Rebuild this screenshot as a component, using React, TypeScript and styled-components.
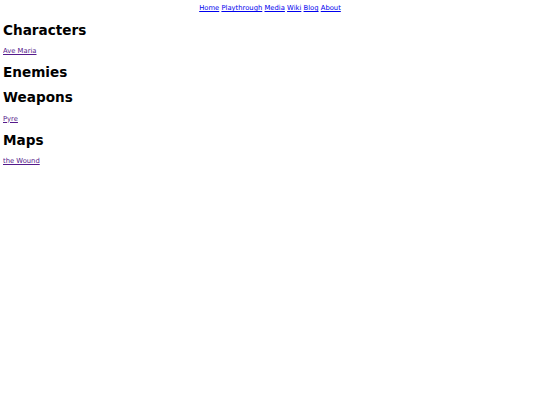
import styled, { createGlobalStyle } from "styled-components";

const GlobalStyle = createGlobalStyle`
  html, body {
    background: #ffffff;
  }

  body {
    margin: 4px 3px 3px;
    font-family: "DejaVu Sans", sans-serif;
    font-size: 6.8px;
    color: #000000;
  }
`;

const Nav = styled.nav`
  text-align: center;
  padding-bottom: 1px;
`;

const NavLink = styled.a`
  color: #0000ee;
  text-decoration: underline;
`;

const Heading = styled.h1`
  font-size: 2em;
  font-weight: bold;
  margin: 0.67em 0;
`;

const EntryList = styled.div`
  margin: 0;
`;

const Entry = styled.a`
  color: #551a8b;
  text-decoration: underline;
`;

const navItems = ["Home", "Playthrough", "Media", "Wiki", "Blog", "About"];

const sections: { title: string; entries: string[] }[] = [
  { title: "Characters", entries: ["Ave Maria"] },
  { title: "Enemies", entries: [] },
  { title: "Weapons", entries: ["Pyre"] },
  { title: "Maps", entries: ["the Wound"] },
];

export default function App() {
  return (
    <>
      <GlobalStyle />
      <Nav>
        {navItems.map((item, i) => (
          <span key={item}>
            {i > 0 && " "}
            <NavLink href="#">{item}</NavLink>
          </span>
        ))}
      </Nav>

      {sections.map((section) => (
        <section key={section.title}>
          <Heading>{section.title}</Heading>
          {section.entries.length > 0 && (
            <EntryList>
              {section.entries.map((entry) => (
                <Entry key={entry} href="#">
                  {entry}
                </Entry>
              ))}
            </EntryList>
          )}
        </section>
      ))}
    </>
  );
}
